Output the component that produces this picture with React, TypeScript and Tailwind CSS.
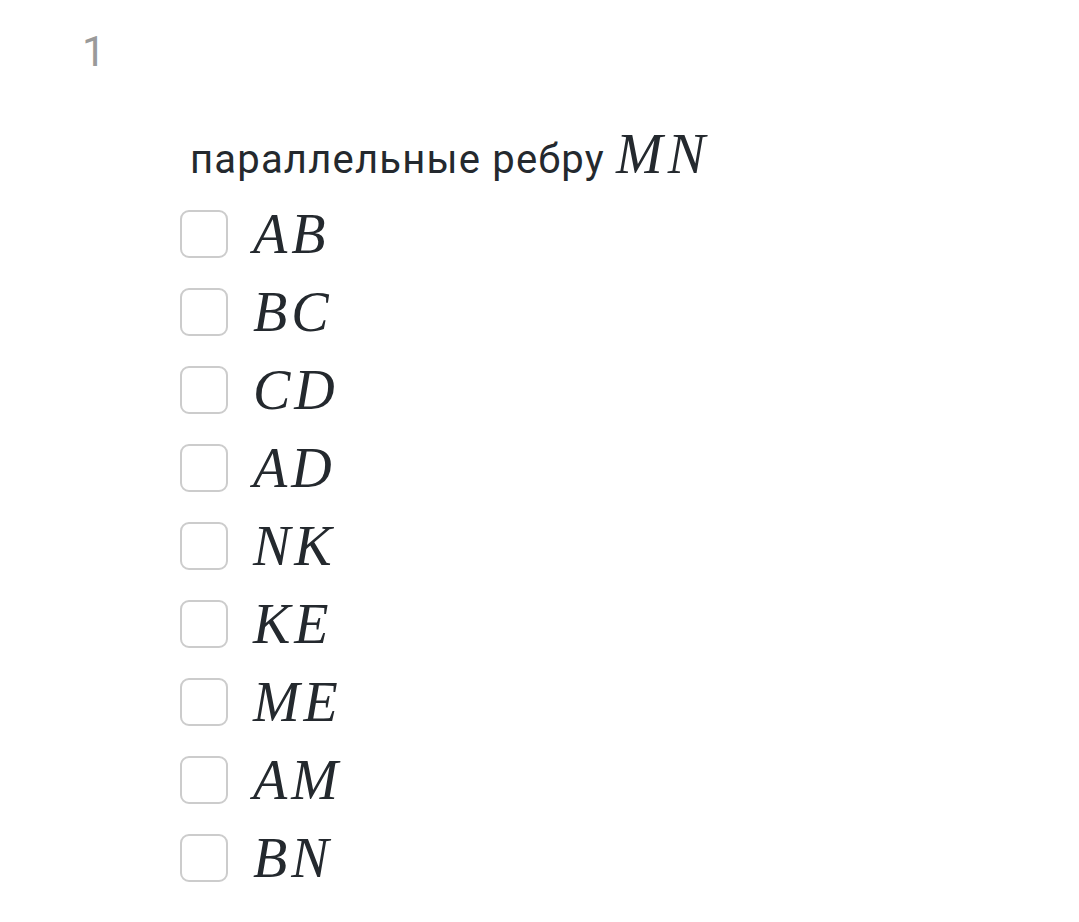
import React from "react"

const options = [
  ["A", "B"],
  ["B", "C"],
  ["C", "D"],
  ["A", "D"],
  ["N", "K"],
  ["K", "E"],
  ["M", "E"],
  ["A", "M"],
  ["B", "N"],
]

function MathVar({ letters, className }: { letters: string[]; className: string }) {
  return (
    <span className={"italic " + className} style={{ fontFamily: '"Liberation Serif", "DejaVu Serif", serif' }}>
      {letters.join("")}
    </span>
  )
}

export default function App() {
  return (
    <div className="min-h-[922px] w-full bg-white" style={{ fontFamily: 'Roboto, "Noto Sans", sans-serif' }}>
      <div className="pl-[82px] pt-[28px] text-[42px] leading-[48px] text-[#9a9a9a]">1</div>
      <div className="pl-[180px] pt-[54px]">
        <div className="pl-[10px] flex items-baseline text-[40px] leading-[48px] tracking-[0.03em] text-[#24292e]">
          <span>параллельные ребру&nbsp;</span>
          <MathVar letters={["M", "N"]} className="text-[56px] tracking-[0.09em]" />
        </div>
        <div className="mt-[26px] flex flex-col gap-[30px]">
          {options.map((o, i) => (
            <label key={i} className="flex items-center gap-[25px]">
              <span className="block w-[48px] h-[48px] rounded-[9px] border-2 border-[#cccccc] bg-white" />
              <MathVar letters={o} className="text-[56px] leading-[48px] tracking-[0.07em] text-[#24292e]" />
            </label>
          ))}
        </div>
      </div>
    </div>
  )
}
